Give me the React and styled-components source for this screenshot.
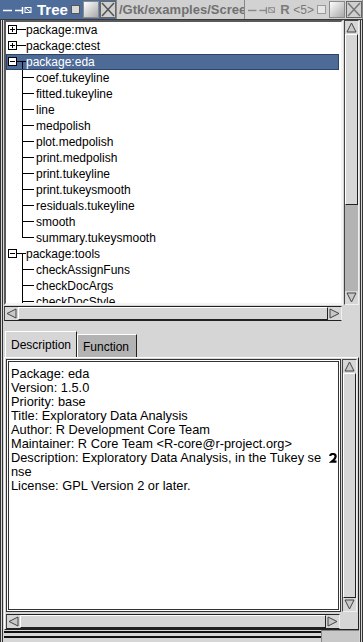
import React from "react";
import styled, { createGlobalStyle } from "styled-components";

const Global = createGlobalStyle`
  html, body {
    margin: 0;
    padding: 0;
    background: #d6d6d6;
    font-family: "Liberation Sans", Arial, sans-serif;
    font-size: 12px;
  }
  * { box-sizing: border-box; }
`;

const Screen = styled.div`
  width: 363px;
  height: 642px;
  overflow: hidden;
  display: flex;
  flex-direction: column;
  background: #d6d6d6;
`;

const TitleBar = styled.div`
  flex: none;
  height: 20px;
  display: flex;
  border-bottom: 1px solid #3a3a3a;
  overflow: hidden;
`;

const TitleTab = styled.div`
  width: ${(p) => p.$w}px;
  flex: none;
  display: flex;
  align-items: center;
  padding-left: 3px;
  background: ${(p) => (p.$active ? "#4f6d9b" : "#d2d2d2")};
  color: ${(p) => (p.$active ? "#fff" : "#7a7a7a")};
  font-weight: bold;
  font-size: ${(p) => (p.$active ? 15 : 13)}px;
  border-right: 1px solid #888;
  white-space: nowrap;
  overflow: hidden;
`;

const TitleText = styled.span`
  margin: 0 3px 0 4px;
`;

const TitleMid = styled.div`
  width: 128px;
  flex: none;
  display: flex;
  align-items: center;
  padding-left: 2px;
  background: #d0d0d0;
  color: #707070;
  font-weight: bold;
  font-size: 13px;
  white-space: nowrap;
  overflow: hidden;
  border-right: 1px solid #888;
`;

const SmallBox = styled.span`
  width: 9px;
  height: 9px;
  flex: none;
  border: 1px solid ${(p) => (p.$dim ? "#9a9a9a" : "#555")};
  background: ${(p) => (p.$dim ? "#e6e6e6" : "#d8d8d8")};
  margin-right: 3px;
`;

const BigBox = styled.span`
  width: 16px;
  height: 17px;
  flex: none;
  background: linear-gradient(135deg, #ffffff, #a8a8a8);
  border: 1px solid #8a8a8a;
  margin-right: 1px;
`;

const CloseBox = styled.span`
  width: 16px;
  height: 17px;
  flex: none;
  display: flex;
  align-items: center;
  justify-content: center;
  background: #cfcfcf;
  border: 1px solid #666;
`;

const Body = styled.div`
  flex: 1;
  min-height: 0;
  display: flex;
  flex-direction: column;
  padding: 0 1px 0 1px;
  border-left: 3px double #333;
  border-right: 3px double #333;
`;

const ScrollRow = styled.div`
  flex: none;
  display: flex;
  height: ${(p) => p.$h}px;
`;

const ListFrame = styled.div`
  flex: 1;
  background: #fff;
  border: 2px solid;
  border-color: #5a5a5a #f4f4f4 #f4f4f4 #5a5a5a;
  overflow: hidden;
`;

const TreeRow = styled.div`
  height: 16px;
  flex: none;
  display: flex;
  align-items: center;
  white-space: nowrap;
  margin-right: 2px;
  background: ${(p) => (p.$sel ? "#4e6b98" : "transparent")};
  color: ${(p) => (p.$sel ? "#fff" : "#000")};
  outline: ${(p) => (p.$sel ? "1px solid #2d4468" : "none")};
  outline-offset: -1px;
`;

const Label = styled.span`
  line-height: 16px;
`;

const VScroll = styled.div`
  width: 15px;
  margin-left: 1px;
  display: flex;
  flex-direction: column;
  background: #b3b3b3;
  border: 1px solid;
  border-color: #444 #f0f0f0 #f0f0f0 #444;
`;

const HScroll = styled.div`
  flex: none;
  height: 15px;
  display: flex;
  background: #b3b3b3;
  border: 1px solid;
  border-color: #222 #f0f0f0 #222 #444;
  width: ${(p) => p.$w}px;
  margin-top: ${(p) => p.$mt}px;
`;

const Arrow = styled.div`
  width: 13px;
  height: 13px;
  flex: none;
  display: flex;
  align-items: center;
  justify-content: center;
  background: #d6d6d6;
`;

const Slider = styled.div`
  flex: ${(p) => p.$grow || 1};
  background: #d6d6d6;
  border: 1px solid;
  border-color: #fff #222 #222 #fff;
`;

const Trough = styled.div`
  flex: ${(p) => p.$grow};
`;

const Tabs = styled.div`
  flex: none;
  display: flex;
  align-items: flex-end;
  margin-top: 10px;
  height: 26px;
  padding-left: 1px;
`;

const Tab = styled.div`
  width: ${(p) => p.$w}px;
  height: ${(p) => (p.$active ? 26 : 23)}px;
  padding: 0 0 0 5px;
  display: flex;
  align-items: center;
  font-size: 12px;
  background: ${(p) => (p.$active ? "#d6d6d6" : "#b3b3b3")};
  border: 1px solid;
  border-bottom: none;
  border-color: #fff #222 transparent #fff;
  padding-top: ${(p) => (p.$active ? 0 : 2)}px;
`;

const Page = styled.div`
  flex: none;
  display: flex;
  flex-direction: column;
  border: 1px solid;
  border-color: #fff #222 #222 #fff;
  padding: 1px 1px 0 1px;
`;

const TextView = styled.div`
  flex: 1;
  background: #fff;
  border: 3px double #333;
  padding: 5px 0 2px 2px;
  line-height: 14px;
  font-size: 12.8px;
`;

const Line = styled.div`
  white-space: nowrap;
  display: flex;
  align-items: center;
  height: 14px;
`;

const Footer = styled.div`
  flex: none;
  height: 12px;
  display: flex;
  align-items: flex-start;
`;

const FootBar = styled.div`
  flex: 1;
  height: 7px;
  border-top: 2px solid #111;
  border-bottom: 2px solid #111;
  margin-top: 1px;
`;

const FootCorner = styled.div`
  width: 38px;
  height: 12px;
  background: #c8c8c8;
  border-top: 1px solid #888;
  border-left: 1px solid #888;
`;

const Tri = ({ dir }) => {
  const pts = {
    up: "6.5,2 11,11 2,11",
    down: "2,2 11,2 6.5,11",
    left: "2,6.5 11,2 11,11",
    right: "11,6.5 2,2 2,11",
  }[dir];
  return (
    <svg width="13" height="13" viewBox="0 0 13 13">
      <polygon points={pts} fill="#c8c8c8" stroke="#444" strokeWidth="1" />
    </svg>
  );
};

const Expander = ({ open }) => (
  <svg width="20" height="16" viewBox="0 0 20 16">
    <rect x="2.5" y="3.5" width="8" height="8" fill="#fff" stroke="#000" />
    <line x1="4" y1="7.5" x2="9" y2="7.5" stroke="#000" />
    {!open && <line x1="6.5" y1="5" x2="6.5" y2="10" stroke="#000" />}
    <line x1="11" y1="7.5" x2="20" y2="7.5" stroke="#000" />
    {open && <line x1="16.5" y1="7.5" x2="16.5" y2="16" stroke="#000" />}
  </svg>
);

const Branch = ({ last }) => (
  <svg width="30" height="16" viewBox="0 0 30 16">
    <line x1="16.5" y1="0" x2="16.5" y2={last ? 8 : 16} stroke="#000" />
    <line x1="16.5" y1="7.5" x2="28" y2="7.5" stroke="#000" />
  </svg>
);

const MenuGlyph = ({ color }) => (
  <svg width="30" height="10" viewBox="0 0 30 10">
    <line x1="0" y1="5.5" x2="9" y2="5.5" stroke={color} strokeWidth="1.5" />
    <line x1="12" y1="5.5" x2="19" y2="5.5" stroke={color} strokeWidth="1.5" />
    <line x1="19.5" y1="2" x2="19.5" y2="9" stroke={color} strokeWidth="1.5" />
    <rect x="22" y="2.5" width="6" height="5" fill="none" stroke={color} />
    <line x1="22" y1="2.5" x2="28" y2="7.5" stroke={color} />
  </svg>
);

const CloseX = ({ color }) => (
  <svg width="14" height="15" viewBox="0 0 14 15">
    <line x1="1" y1="1" x2="13" y2="14" stroke={color} strokeWidth="1.5" />
    <line x1="13" y1="1" x2="1" y2="14" stroke={color} strokeWidth="1.5" />
  </svg>
);

const WrapMark = () => (
  <svg width="8" height="10" viewBox="0 0 8 10" style={{ marginLeft: "auto", marginRight: 1 }}>
    <path d="M1.2 3 Q1.2 1 3.8 1 Q6.6 1 6.6 3.4 Q6.6 5.4 2.8 8.6 L7.5 8.6" fill="none" stroke="#000" strokeWidth="2.2" />
  </svg>
);

const tree = [
  { label: "package:mva", level: 0 },
  { label: "package:ctest", level: 0 },
  { label: "package:eda", level: 0, open: true, sel: true },
  { label: "coef.tukeyline", level: 1 },
  { label: "fitted.tukeyline", level: 1 },
  { label: "line", level: 1 },
  { label: "medpolish", level: 1 },
  { label: "plot.medpolish", level: 1 },
  { label: "print.medpolish", level: 1 },
  { label: "print.tukeyline", level: 1 },
  { label: "print.tukeysmooth", level: 1 },
  { label: "residuals.tukeyline", level: 1 },
  { label: "smooth", level: 1 },
  { label: "summary.tukeysmooth", level: 1, last: true },
  { label: "package:tools", level: 0, open: true },
  { label: "checkAssignFuns", level: 1 },
  { label: "checkDocArgs", level: 1 },
  { label: "checkDocStyle", level: 1 },
];

const desc = [
  "Package: eda",
  "Version: 1.5.0",
  "Priority: base",
  "Title: Exploratory Data Analysis",
  "Author: R Development Core Team",
  "Maintainer: R Core Team <R-core@r-project.org>",
  "Description: Exploratory Data Analysis, in the Tukey se",
  "nse",
  "License: GPL Version 2 or later.",
];

export default function App() {
  return (
    <Screen>
      <Global />
      <TitleBar>
        <TitleTab $active $w={117}>
          <MenuGlyph color="#fff" />
          <TitleText>Tree</TitleText>
          <SmallBox />
          <BigBox />
          <CloseBox>
            <CloseX color="#555" />
          </CloseBox>
        </TitleTab>
        <TitleMid>/Gtk/examples/Screenshots</TitleMid>
        <TitleTab $w={118}>
          <MenuGlyph color="#8a8a8a" />
          <TitleText>R <span style={{ fontWeight: "normal", fontSize: 12 }}>&lt;5&gt;</span></TitleText>
          <SmallBox $dim />
          <BigBox />
          <CloseBox>
            <CloseX color="#777" />
          </CloseBox>
        </TitleTab>
      </TitleBar>
      <Body>
        <ScrollRow $h={285}>
          <ListFrame>
            {tree.map((n) => (
              <TreeRow key={n.label} $sel={n.sel}>
                {n.level === 0 ? <Expander open={n.open} /> : <Branch last={n.last} />}
                <Label>{n.label}</Label>
              </TreeRow>
            ))}
          </ListFrame>
          <VScroll>
            <Arrow><Tri dir="up" /></Arrow>
            <Slider $grow={170} />
            <Trough $grow={86} />
            <Arrow><Tri dir="down" /></Arrow>
          </VScroll>
        </ScrollRow>
        <HScroll $w={338} $mt={1}>
          <Arrow><Tri dir="left" /></Arrow>
          <Slider />
          <Arrow><Tri dir="right" /></Arrow>
        </HScroll>
        <Tabs>
          <Tab $active $w={72}>Description</Tab>
          <Tab $w={60}>Function</Tab>
        </Tabs>
        <Page>
          <ScrollRow $h={253}>
            <TextView>
              {desc.map((l, i) => (
                <Line key={i}>
                  {l}
                  {i === 6 && <WrapMark />}
                </Line>
              ))}
            </TextView>
            <VScroll>
              <Arrow><Tri dir="up" /></Arrow>
              <Slider />
              <Arrow><Tri dir="down" /></Arrow>
            </VScroll>
          </ScrollRow>
          <HScroll $w={334} $mt={2}>
            <Arrow><Tri dir="left" /></Arrow>
            <Slider />
            <Arrow><Tri dir="right" /></Arrow>
          </HScroll>
        </Page>
        <Footer>
          <FootBar />
          <FootCorner />
        </Footer>
      </Body>
    </Screen>
  );
}
